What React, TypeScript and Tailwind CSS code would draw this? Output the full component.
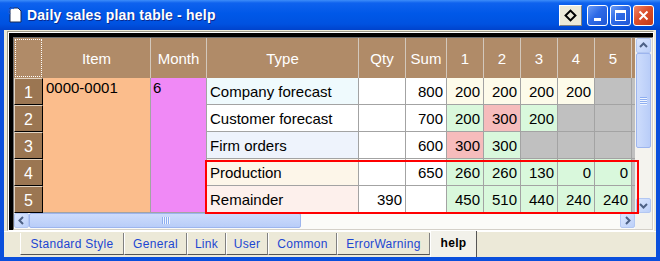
import type { ReactNode } from "react";

type CellTone = "yellow" | "green" | "pink" | "gray";

interface PlanRow {
  no: number;
  type: string;
  typeBg: string;
  qty: string;
  sum: string;
  days: [string, CellTone][];
}

const toneClass: Record<CellTone, string> = {
  yellow: "bg-[#fdfbea]",
  green: "bg-[#d9f8dc]",
  pink: "bg-[#f6bcbc]",
  gray: "bg-[#c0c0c0]",
};

const rows: PlanRow[] = [
  {
    no: 1,
    type: "Company forecast",
    typeBg: "bg-[#effafd]",
    qty: "",
    sum: "800",
    days: [
      ["200", "yellow"],
      ["200", "yellow"],
      ["200", "yellow"],
      ["200", "yellow"],
      ["", "gray"],
    ],
  },
  {
    no: 2,
    type: "Customer forecast",
    typeBg: "bg-white",
    qty: "",
    sum: "700",
    days: [
      ["200", "green"],
      ["300", "pink"],
      ["200", "green"],
      ["", "gray"],
      ["", "gray"],
    ],
  },
  {
    no: 3,
    type: "Firm orders",
    typeBg: "bg-[#eef3fc]",
    qty: "",
    sum: "600",
    days: [
      ["300", "pink"],
      ["300", "green"],
      ["", "gray"],
      ["", "gray"],
      ["", "gray"],
    ],
  },
  {
    no: 4,
    type: "Production",
    typeBg: "bg-[#fdf6e9]",
    qty: "",
    sum: "650",
    days: [
      ["260", "green"],
      ["260", "green"],
      ["130", "green"],
      ["0", "green"],
      ["0", "green"],
    ],
  },
  {
    no: 5,
    type: "Remainder",
    typeBg: "bg-[#fdf0ec]",
    qty: "390",
    sum: "",
    days: [
      ["450", "green"],
      ["510", "green"],
      ["440", "green"],
      ["240", "green"],
      ["240", "green"],
    ],
  },
];

const headers = ["Item", "Month", "Type", "Qty", "Sum", "1", "2", "3", "4", "5"];

const tabs = [
  { label: "Standard Style", width: "w-[104px]" },
  { label: "General", width: "w-[63px]" },
  { label: "Link", width: "w-[39px]" },
  { label: "User", width: "w-[42px]" },
  { label: "Common", width: "w-[69px]" },
  { label: "ErrorWarning", width: "w-[93px]" },
];

function Chevron({ dir }: { dir: "up" | "down" | "left" | "right" }) {
  const points = {
    up: "2,7 5.5,3.5 9,7",
    down: "2,4 5.5,7.5 9,4",
    left: "7,2 3.5,5.5 7,9",
    right: "4,2 7.5,5.5 4,9",
  }[dir];

  return (
    <svg width="11" height="11" viewBox="0 0 11 11">
      <polyline points={points} fill="none" stroke="#4d6185" strokeWidth="2" />
    </svg>
  );
}

function ScrollButton({ dir }: { dir: "up" | "down" | "left" | "right" }) {
  return (
    <div className="flex h-[15px] w-[15px] shrink-0 items-center justify-center rounded-[2px] border border-[#b3c7f2] bg-[linear-gradient(135deg,#dce7fe,#bcd0f9)]">
      <Chevron dir={dir} />
    </div>
  );
}

function Grip({ vertical }: { vertical?: boolean }) {
  return (
    <div className={vertical ? "flex flex-col gap-[1px]" : "flex gap-[1px]"}>
      {[0, 1, 2, 3].map((i) => (
        <span
          key={i}
          className={
            vertical
              ? "h-[1px] w-[7px] bg-[#8eaef0] shadow-[0_1px_0_#eef4ff]"
              : "h-[7px] w-[1px] bg-[#8eaef0] shadow-[1px_0_0_#eef4ff]"
          }
        />
      ))}
    </div>
  );
}

function Cell({
  children,
  className,
}: {
  children?: ReactNode;
  className?: string;
}) {
  return (
    <div className={`flex items-center border-r border-b border-[#a3a3a3] pt-[2px] ${className ?? ""}`}>
      {children}
    </div>
  );
}

function TitleButton({ kind }: { kind: "min" | "max" | "close" }) {
  const bg =
    kind === "close"
      ? "bg-[linear-gradient(135deg,#f0866a,#dc4f2c_45%,#c33a18)]"
      : "bg-[linear-gradient(135deg,#6b9cf6,#2e6ae6_45%,#1f57d6)]";

  return (
    <div
      className={`flex h-[21px] w-[21px] items-center justify-center rounded-[3px] border border-white ${bg}`}
    >
      {kind === "min" ? <span className="mt-[8px] h-[3px] w-[7px] bg-white" /> : null}
      {kind === "max" ? (
        <span className="h-[11px] w-[11px] border border-t-[3px] border-white" />
      ) : null}
      {kind === "close" ? (
        <svg width="11" height="11" viewBox="0 0 11 11">
          <path d="M1.5 1.5 L9.5 9.5 M9.5 1.5 L1.5 9.5" stroke="white" strokeWidth="2" />
        </svg>
      ) : null}
    </div>
  );
}

export default function App() {
  return (
    <div className="flex h-[261px] w-[660px] flex-col overflow-hidden bg-[#0a4fdc] font-['Liberation_Sans',Arial,sans-serif]">
      {/* title bar */}
      <div className="flex h-[30px] shrink-0 items-center bg-[linear-gradient(to_bottom,#3d8df9_0%,#0f62ee_10%,#0058e8_45%,#0052e0_80%,#0043cc_100%)] pr-[6px] pl-[7px]">
        <svg width="16" height="16" viewBox="0 0 16 16" className="shrink-0">
          <path d="M3 1 H11 L14 4 V15 H3 Z" fill="white" stroke="#1b2a52" strokeWidth="1" />
          <path d="M1.5 5 C2 1.5 5 0.5 7 1.5" fill="none" stroke="#1a5cd8" strokeWidth="1.5" />
          <path d="M1 5 L3 7" stroke="#1a5cd8" strokeWidth="1.2" />
        </svg>
        <span className="ml-[4px] text-[14px] font-bold tracking-[0.2px] text-white [text-shadow:1px_1px_0_#0b2a8f]">
          Daily sales plan table - help
        </span>
        <div className="ml-auto flex items-center">
          <div className="mr-[5px] flex h-[21px] w-[23px] items-center justify-center border border-t-white border-l-white border-r-[#808080] border-b-[#808080] bg-[#ece9d8]">
            <span className="h-[9px] w-[9px] rotate-45 border-2 border-black" />
          </div>
          <div className="flex gap-[2px]">
            <TitleButton kind="min" />
            <TitleButton kind="max" />
            <TitleButton kind="close" />
          </div>
        </div>
      </div>

      <div className="flex flex-1 px-[4px] pb-[4px]">
        <div className="flex flex-1 flex-col bg-[#ece9d8] pt-[1px]">
          {/* sheet panel */}
          <div className="ml-[3px] h-[200px] w-[647px] border border-t-[#9d9a8a] border-l-[#9d9a8a] border-r-white border-b-white">
            <div className="h-full border-t border-l border-white">
              <div className="h-full border-t-[4px] border-l-[4px] border-black">
                <div className="relative flex h-full flex-col border border-t-[#707070] border-l-[#707070] border-r-[#d4d0c8] border-b-[#d4d0c8] bg-[#ece9d8]">
                  <div className="flex h-[175px]">
                    <div className="grid w-[621px] grid-cols-[29px_108px_56px_152px_47px_41px_37px_37px_37px_37px_37px_3px] grid-rows-[40px_27px_27px_27px_27px_27px] text-[15px] text-black">
                      {/* header */}
                      <div className="flex items-center justify-center bg-[#b08b68] p-[1px]">
                        <div className="h-full w-full border border-dotted border-white" />
                      </div>
                      {headers.map((h) => (
                        <div
                          key={h}
                          className="flex items-center justify-center border-r border-[#d3c8bc] bg-[#b08b68] pt-[2px] text-white"
                        >
                          {h}
                        </div>
                      ))}
                      <div className="bg-[#b08b68]" />

                      {rows.map((row) => (
                        <RowCells key={row.no} row={row} />
                      ))}
                    </div>
                    {/* vertical scrollbar */}
                    <div className="flex w-[17px] flex-col bg-[#f4f3ee] pl-[1px]">
                      <ScrollButton dir="up" />
                      <div className="flex h-[95px] w-[15px] items-center justify-center rounded-[2px] border border-[#9db5ee] bg-[linear-gradient(to_right,#cddcfc,#b9cdf8)]">
                        <Grip vertical />
                      </div>
                      <div className="flex-1" />
                      <ScrollButton dir="down" />
                    </div>
                  </div>
                  {/* horizontal scrollbar */}
                  <div className="flex h-[16px]">
                    <div className="flex w-[621px] bg-[#fbfbf8]">
                      <ScrollButton dir="left" />
                      <div className="flex h-[15px] w-[272px] items-center justify-center rounded-[2px] border border-[#9db5ee] bg-[linear-gradient(to_bottom,#cddcfc,#b9cdf8)]">
                        <Grip />
                      </div>
                      <div className="flex-1" />
                      <ScrollButton dir="right" />
                    </div>
                    <div className="flex-1 bg-[#f4f3ee]" />
                  </div>

                  {/* highlight box */}
                  <div className="absolute top-[122px] left-[191px] h-[54px] w-[434px] border-2 border-[#ff0000]" />
                </div>
              </div>
            </div>
          </div>

          {/* sheet tabs */}
          <div className="flex h-[26px] border-t border-white pl-[16px] text-[12px] tracking-[0.3px]">
            {tabs.map((tab) => (
              <div
                key={tab.label}
                className={`mt-[1px] flex h-[22px] items-center justify-center border-r border-b border-l border-r-[#808080] border-b-[#555] border-l-white text-[#1c46d2] ${tab.width}`}
              >
                {tab.label}
              </div>
            ))}
            <div className="-mt-[1px] flex h-[26px] w-[47px] items-center justify-center border-r border-l border-r-[#555] border-l-white bg-[#f2f1ea] pb-[2px] font-bold text-black">
              help
            </div>
          </div>
        </div>
      </div>
    </div>
  );
}

function RowCells({ row }: { row: PlanRow }) {
  return (
    <>
      <div className="flex items-center justify-center border border-t-[#e2d3c0] border-l-[#e2d3c0] border-r-black border-b-black bg-[#9b7652] pt-[2px] text-[16px] text-white">
        {row.no}
      </div>
      {row.no === 1 ? (
        <>
          <div className="row-span-5 border-r border-b border-[#a3a3a3] bg-[#fbbd8c] pt-[1px] pl-[3px] leading-[18px]">
            0000-0001
          </div>
          <div className="row-span-5 border-r border-b border-[#a3a3a3] bg-[#f089f6] pt-[1px] pl-[2px] leading-[18px]">
            6
          </div>
        </>
      ) : null}
      <Cell className={`${row.typeBg} pl-[3px]`}>{row.type}</Cell>
      <Cell className="justify-end bg-white pr-[3px]">{row.qty}</Cell>
      <Cell className="justify-end bg-white pr-[3px]">{row.sum}</Cell>
      {row.days.map(([value, tone], i) => (
        <Cell key={i} className={`justify-end pr-[3px] ${toneClass[tone]}`}>
          {value}
        </Cell>
      ))}
      <div className="border-b border-[#a3a3a3] bg-[#c0c0c0]" />
    </>
  );
}
